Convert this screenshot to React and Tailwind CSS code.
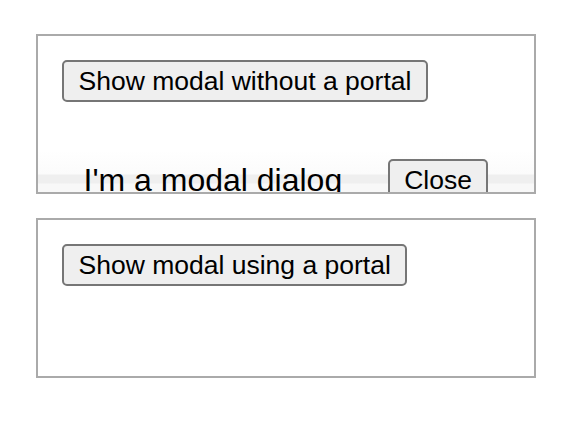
import React from 'react';

const btn =
  'bg-[#efefef] border-2 border-[#767676] rounded-[5px] px-[14.5px] py-[4px] text-[26.5px] leading-[30px] text-black';

function Modal() {
  return (
    <div className="absolute inset-x-0 top-[114px] h-[60px] flex items-center justify-evenly bg-[linear-gradient(to_bottom,#ffffff_0px,#fbfbfb_24px,#efefef_25px,#efefef_33px,#f8f8f8_34px)]">
      <div className="text-[32px] leading-[37px] text-black">I'm a modal dialog</div>
      <button className={btn}>Close</button>
    </div>
  );
}

function Box({ label, children }) {
  return (
    <div className="relative w-[500px] h-[160px] border-2 border-[#aaaaaa] overflow-hidden p-6">
      <button className={btn}>{label}</button>
      {children}
    </div>
  );
}

export default function App() {
  return (
    <div
      className="min-h-screen bg-white pt-[34px] pl-[36px] flex flex-col gap-[24px]"
      style={{ fontFamily: '"Liberation Sans", Arial, sans-serif' }}
    >
      <Box label="Show modal without a portal">
        <Modal />
      </Box>
      <Box label="Show modal using a portal" />
    </div>
  );
}
